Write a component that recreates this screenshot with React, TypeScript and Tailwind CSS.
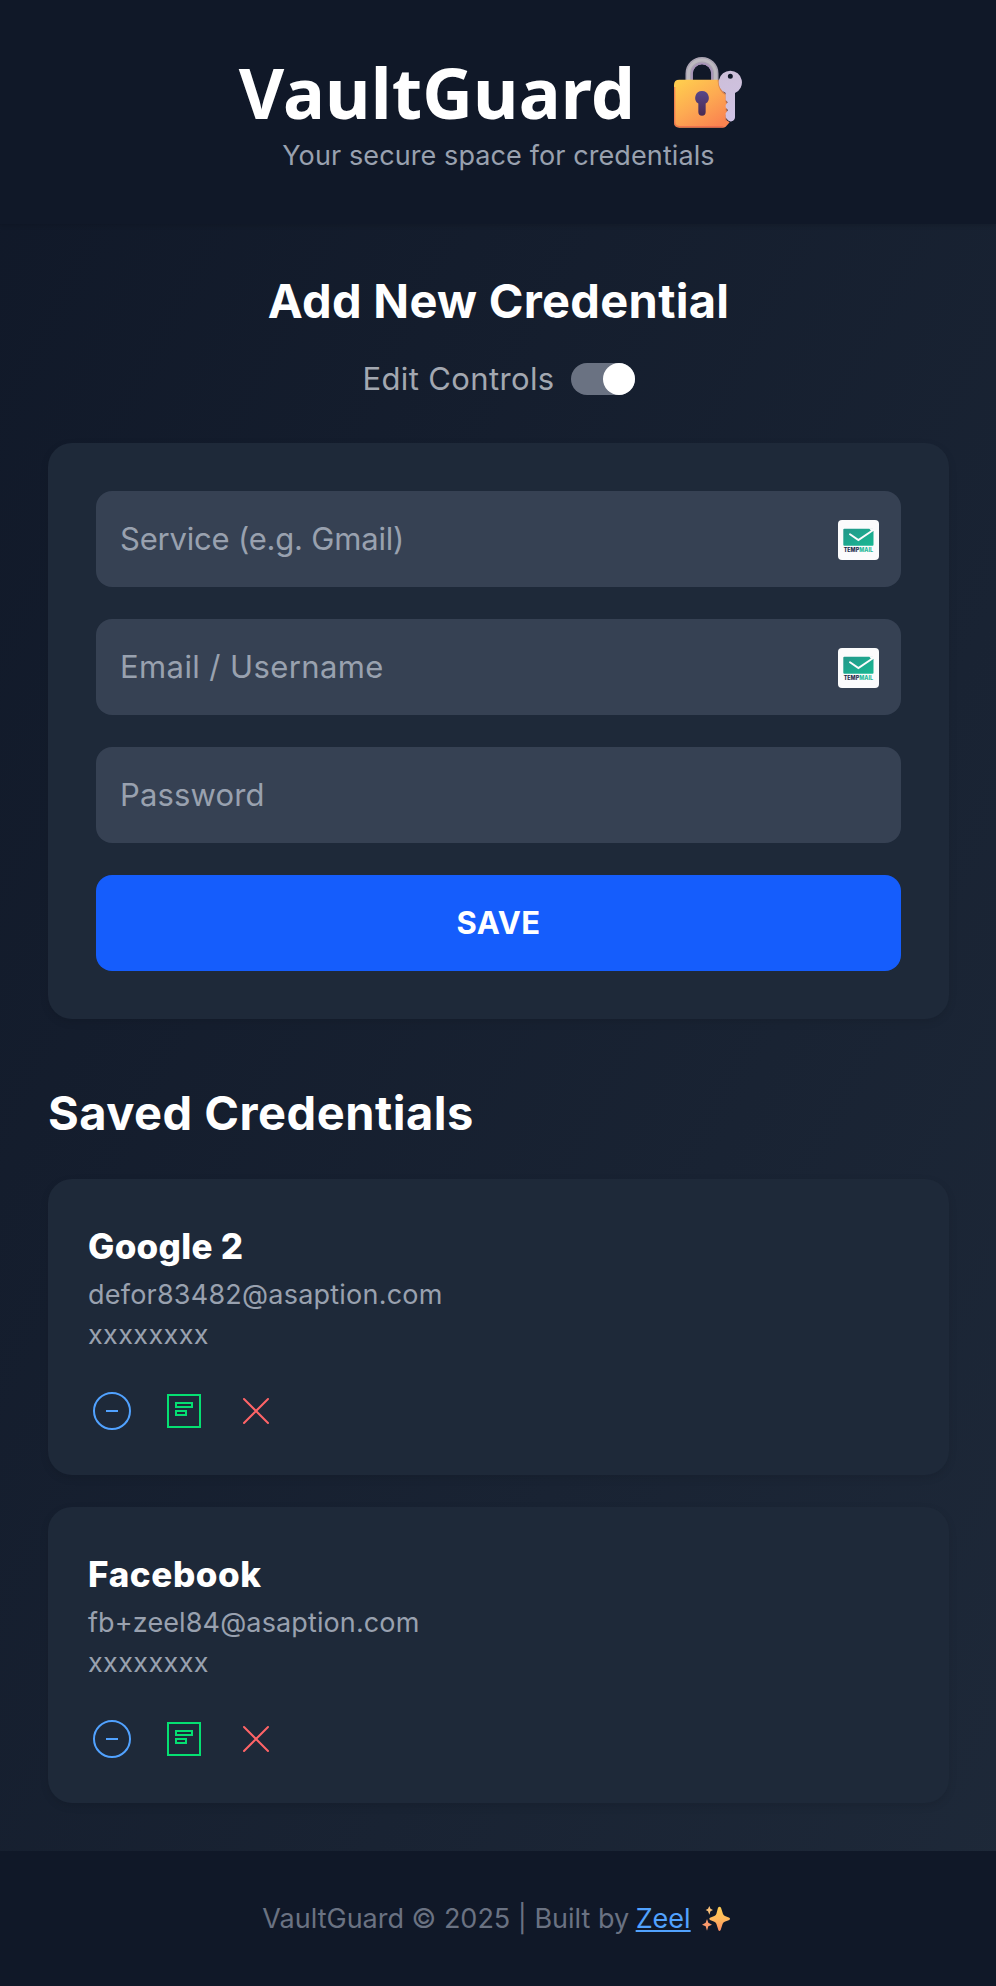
import React from 'react';

function LockIcon() {
  return (
    <svg className="ml-[39px] mr-4 h-[71px] w-[68px] shrink-0" viewBox="0 0 204 213" fill="none">
      <defs>
        <linearGradient id="lockBody" x1="30" y1="68" x2="120" y2="212" gradientUnits="userSpaceOnUse">
          <stop stopColor="#ffcb4e" />
          <stop offset="0.5" stopColor="#fdaa52" />
          <stop offset="1" stopColor="#fa8450" />
        </linearGradient>
        <linearGradient id="lockHole" x1="84" y1="102" x2="84" y2="176" gradientUnits="userSpaceOnUse">
          <stop stopColor="#59478a" />
          <stop offset="1" stopColor="#4a2a52" />
        </linearGradient>
        <linearGradient id="lockKey" x1="150" y1="40" x2="200" y2="190" gradientUnits="userSpaceOnUse">
          <stop stopColor="#cdbfd8" />
          <stop offset="1" stopColor="#d0c3e6" />
        </linearGradient>
      </defs>
      <path d="M45.5 74V49.5a38.5 38.5 0 0 1 77 0V74" stroke="#aaa3b2" strokeWidth="22" />
      <path d="M43.5 74V49.5a40.5 40.5 0 0 1 81 0V74" stroke="#bdb9c0" strokeWidth="9" />
      <path d="M54 74V50a30 30 0 0 1 60 0V74" stroke="#a891bb" strokeWidth="4" />
      <path d="M16 68H134C140 96 150 108 157 112V134L162 145L157 158L163 169L156 174V188L167 196L155 209Q151 212 146 212H16Q0 212 0 196V84Q0 68 16 68Z" fill="url(#lockBody)" />
      <path d="M2 90V195Q2 209 17 209H148" stroke="#e85f4e" strokeOpacity="0.65" strokeWidth="4" />
      <path d="M133 69C135 94 145 108 157 113V134L162 145L157 158L163 169L156 176V190" stroke="#c97450" strokeOpacity="0.7" strokeWidth="5" />
      <path d="M84 102a20.5 20.5 0 0 1 11 37.8V165a11 11 0 0 1-22 0V139.8A20.5 20.5 0 0 1 84 102Z" fill="url(#lockHole)" />
      <path fillRule="evenodd" d="M169 41a35 35 0 0 1 14 67V181a13 13 0 0 1-24 6L155 181V169L162 160L155 151V144L161 136L155 129V108A35 35 0 0 1 169 41ZM169 50a7.5 7.5 0 1 0 0 15a7.5 7.5 0 1 0 0-15Z" fill="url(#lockKey)" />
    </svg>
  );
}

function SparklesIcon() {
  return (
    <svg className="ml-[11.5px] mr-[3.5px] h-[26px] w-[28px] shrink-0" viewBox="0 0 84 78">
      <defs>
        <linearGradient id="spark" x1="0" y1="0" x2="0" y2="1">
          <stop stopColor="#ffcd54" />
          <stop offset="0.5" stopColor="#ffb95c" />
          <stop offset="1" stopColor="#fb8b62" />
        </linearGradient>
      </defs>
      <path d="M48 5Q53 -1 57 5L63 24Q65 28 69 30L82 35Q86 38 82 42L68 47Q64 49 62 53L56 72Q52 78 49 72L43 53Q41 49 37 47L24 42Q20 38 24 35L37 30Q41 28 43 24Z" fill="url(#spark)" />
      <path d="M22 0L25.5 8L33 12L25.5 16L22 26L18 16L11 12L18 8Z" fill="#f6be79" />
      <path d="M15 39L19 50L30 56L19 61L15 74L11 61L0 56L11 50Z" fill="#fb9a6c" />
    </svg>
  );
}

function TempMailIcon() {
  return (
    <svg className="mt-[2px] h-10 w-[41px] shrink-0" viewBox="0 0 41 40">
      <defs>
        <linearGradient id="mail" x1="0" y1="0" x2="1" y2="1">
          <stop stopColor="#22978a" />
          <stop offset="1" stopColor="#19b893" />
        </linearGradient>
      </defs>
      <rect width="41" height="40" rx="4" fill="#fbfbfc" />
      <rect x="5.3" y="8.7" width="30.2" height="17" rx="1" fill="url(#mail)" />
      <path d="M34.5 10.5L20.4 20L12 14.2" fill="none" stroke="#fbfbfc" strokeWidth="2" strokeLinecap="round" />
      <path d="M31 8.2H36V11L33 10.8Z" fill="#fbfbfc" />
      <text x="5.7" y="32" fontSize="5.8" fontWeight="800" fontFamily="Inter, sans-serif" textLength="29.3" lengthAdjust="spacingAndGlyphs" fill="#1c2b4a">
        TEMP<tspan fill="#1fb898">MAIL</tspan>
      </text>
    </svg>
  );
}

type FieldProps = { placeholder: string; type?: string; tracking: string; badge?: boolean };

function Field({ placeholder, type = 'text', tracking, badge }: FieldProps) {
  return (
    <div className="flex h-24 items-center rounded-2xl bg-[#364153] pl-6 pr-[22px]">
      <input
        type={type}
        placeholder={placeholder}
        className={`h-full min-w-0 flex-1 bg-transparent pb-[2px] text-[31px] text-white outline-none placeholder:text-[#99a1af] ${tracking}`}
      />
      {badge && <TempMailIcon />}
    </div>
  );
}

type CardProps = { name: string; nameTracking: string; user: string; userTracking: string };

function CredentialCard({ name, nameTracking, user, userTracking }: CardProps) {
  return (
    <article className="h-[296px] rounded-3xl bg-[#1e2939] p-10 shadow-[0_3px_8px_rgba(0,0,0,0.1)]">
      <h3 className={`mb-px text-[35px] font-extrabold leading-[55px] text-white ${nameTracking}`}>{name}</h3>
      <p className={`text-[27px] leading-10 text-[#99a1af] ${userTracking}`}>{user}</p>
      <p className="text-[27px] leading-10 tracking-[0.38px] text-[#99a1af]">xxxxxxxx</p>
      <div className="mt-8 flex gap-6">
        <button aria-label="Hide" className="text-[#51a2ff]">
          <svg className="size-12" viewBox="0 0 24 24" fill="none" stroke="currentColor">
            <circle cx="12" cy="12" r="9" />
            <path d="M9 12h6" />
          </svg>
        </button>
        <button aria-label="Edit" className="text-[#05df72]">
          <svg className="size-12" viewBox="0 0 24 24" fill="none" stroke="currentColor">
            <path d="M4 4h16v16H4z" />
            <path d="M8 8h8v2H8zM8 12h5v2H8z" />
          </svg>
        </button>
        <button aria-label="Delete" className="text-[#ff6467]">
          <svg className="size-12" viewBox="0 0 24 24" fill="none" stroke="currentColor" strokeLinecap="round">
            <path d="M6 6l12 12M18 6L6 18" />
          </svg>
        </button>
      </div>
    </article>
  );
}

export default function App() {
  return (
    <div className="flex h-[1986px] flex-col bg-linear-to-br from-[#101828] to-[#1e2939] font-['Inter',sans-serif] text-white">
      <header className="flex h-[224px] shrink-0 flex-col items-center bg-[#101828] pl-px pt-12 shadow-[0_2px_4px_rgba(0,0,0,0.12)]">
        <h1 className="flex h-[88px] items-center whitespace-nowrap font-['Noto_Sans',sans-serif] text-[70px] font-bold leading-[88px] tracking-[0.15px]">
          VaultGuard
          <LockIcon />
        </h1>
        <p className="text-[27px] leading-10 tracking-[0.1px] text-[#99a1af]">Your secure space for credentials</p>
      </header>

      <main className="flex flex-1 flex-col pl-12 pr-[47px] pt-[47px]">
        <h2 className="text-center text-[47px] font-bold leading-[60px] tracking-[0.3px]">Add New Credential</h2>
        <div className="mt-6 flex h-12 items-center justify-center gap-[17px] pl-px">
          <span className="text-[31px] leading-[48px] tracking-[0.36px] text-[#a3a8b1]">Edit Controls</span>
          <button aria-label="Toggle edit controls" className="flex h-8 w-16 justify-end rounded-full bg-[#6a7282]">
            <span className="size-8 rounded-full bg-white" />
          </button>
        </div>

        <form className="mt-10 flex flex-col gap-8 rounded-3xl bg-[#1e2939] p-12 shadow-[0_3px_8px_rgba(0,0,0,0.1)]">
          <Field placeholder="Service (e.g. Gmail)" tracking="tracking-[-0.2px]" badge />
          <Field placeholder="Email / Username" tracking="tracking-[0.4px]" badge />
          <Field placeholder="Password" type="password" tracking="tracking-[0.15px]" />
          <button type="button" className="h-24 rounded-2xl bg-[#155dfc] text-[31px] font-bold tracking-[0.4px]">
            SAVE
          </button>
        </form>

        <h2 className="mt-16 text-[47px] font-bold leading-[60px] tracking-[0.5px]">Saved Credentials</h2>
        <div className="mt-9 flex flex-col gap-8">
          <CredentialCard name="Google 2" nameTracking="tracking-[0.3px]" user="defor83482@asaption.com" userTracking="tracking-[0.22px]" />
          <CredentialCard name="Facebook" nameTracking="tracking-[0.6px]" user="fb+zeel84@asaption.com" userTracking="tracking-[0.12px]" />
        </div>
      </main>

      <footer className="flex h-[135px] shrink-0 items-center justify-center whitespace-nowrap bg-[#101828] text-[27px] leading-10 text-[#6a7282]">
        <span>VaultGuard © 2025 | Built by</span>
        <a href="#" className="ml-[6.5px] text-[#51a2ff] underline decoration-2 underline-offset-2">Zeel</a>
        <SparklesIcon />
      </footer>
    </div>
  );
}
